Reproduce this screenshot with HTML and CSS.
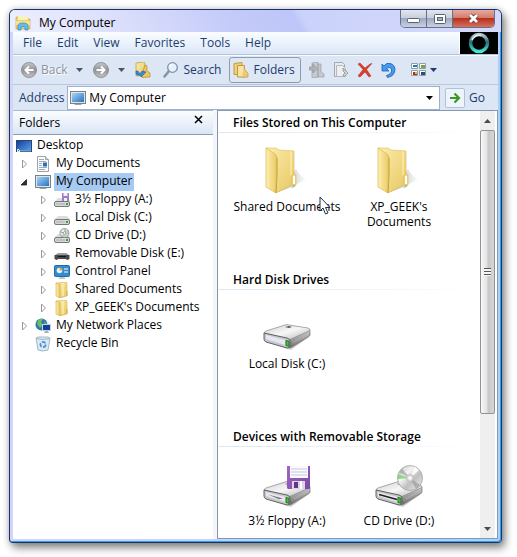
FILE: index.html
```html
<!DOCTYPE html>
<html lang="en">
<head>
  <meta charset="UTF-8">
  <meta name="viewport" content="width=device-width, initial-scale=1.0">
  <title>My Computer</title>
  <link rel="stylesheet" href="styles.css">
</head>
<body>
  <!-- shared icons -->
  <svg class="sprite" aria-hidden="true">
    <defs>
      <linearGradient id="gold" x1="0" y1="0" x2="1" y2="1">
        <stop offset="0" stop-color="#fbeeb0"/><stop offset="1" stop-color="#e8c860"/>
      </linearGradient>
      <linearGradient id="goldFront" x1="0" y1="0" x2="1" y2="0">
        <stop offset="0" stop-color="#fdf0b0"/><stop offset="1" stop-color="#e9c862"/>
      </linearGradient>
      <linearGradient id="screen" x1="0" y1="0" x2="1" y2="1">
        <stop offset="0" stop-color="#a5d5f8"/><stop offset="1" stop-color="#2873bd"/>
      </linearGradient>
      <linearGradient id="navy" x1="0" y1="0" x2="1" y2="1">
        <stop offset="0" stop-color="#123b96"/><stop offset="1" stop-color="#5ca5ee"/>
      </linearGradient>
      <linearGradient id="metalTop" x1="0" y1="0" x2="1" y2="1">
        <stop offset="0" stop-color="#cfcfcf"/><stop offset=".5" stop-color="#f7f7f7"/><stop offset="1" stop-color="#b5b5b5"/>
      </linearGradient>
      <linearGradient id="metalSide" x1="0" y1="0" x2="0" y2="1">
        <stop offset="0" stop-color="#d0d0d0"/><stop offset="1" stop-color="#707070"/>
      </linearGradient>
      <linearGradient id="grayBall" x1="0" y1="0" x2="0" y2="1">
        <stop offset="0" stop-color="#c9cacc"/><stop offset=".5" stop-color="#8f9194"/><stop offset="1" stop-color="#c3c5c8"/>
      </linearGradient>
      <linearGradient id="purple" x1="0" y1="0" x2="1" y2="1">
        <stop offset="0" stop-color="#a267c4"/><stop offset="1" stop-color="#7b48a4"/>
      </linearGradient>
      <linearGradient id="disc" x1="0" y1="0" x2="1" y2="1">
        <stop offset="0" stop-color="#bdbdbd"/><stop offset=".35" stop-color="#f5f5f5"/><stop offset=".6" stop-color="#c0c0c0"/><stop offset="1" stop-color="#eee"/>
      </linearGradient>
      <linearGradient id="teal" x1="0" y1="0" x2="0" y2="1">
        <stop offset="0" stop-color="#b8cbd1"/><stop offset=".45" stop-color="#2b6a7c"/><stop offset="1" stop-color="#3fe9d5"/>
      </linearGradient>
      <linearGradient id="castFade" x1="0" y1="0" x2="1" y2="0">
        <stop offset="0" stop-color="#777" stop-opacity=".7"/><stop offset="1" stop-color="#999" stop-opacity="0"/>
      </linearGradient>
    </defs>

    <symbol id="monitor" viewBox="0 0 16 16">
      <rect x=".5" y="1.500" width="15" height="12" fill="#dfe5ea" stroke="#77828c"/>
      <rect x="2" y="3" width="12" height="9" fill="url(#screen)"/>
      <path d="M5 14h6l1 1H4z" fill="#9ba3aa"/>
    </symbol>
    <symbol id="desktop" viewBox="0 0 16 16">
      <rect x=".5" y="2.500" width="15" height="11" fill="url(#navy)" stroke="#274673"/>
      <path d="M1 12h14v1.500H1z" fill="#6f9ccc"/><path d="M1 11h3v3H1z" fill="#d7e8f5"/><path d="M2 13l3-3" stroke="#2d83c8"/>
    </symbol>
    <symbol id="docs" viewBox="0 0 16 16">
      <path d="M2.500.5h8l3 3v12h-11z" fill="#fafcfd" stroke="#9ba3a9"/>
      <path d="M10.500.5v3h3" fill="#dfe5e9" stroke="#9ba3a9"/>
      <path d="M4 3.500h5M4 5.500h7M4 7.500h3M4 9.500h3M4 11.500h8M4 13.500h6" stroke="#9aaebf"/>
      <rect x="8" y="6.500" width="4" height="4" fill="#2f6fb4"/>
    </symbol>
    <symbol id="folder16" viewBox="0 0 16 16">
      <path d="M2 1l10-1 1 1v13l-7 2z" fill="url(#gold)" stroke="#d0a73f" stroke-width=".5"/>
      <path d="M2 1l4 1.500V16l-4-2z" fill="url(#goldFront)" stroke="#c99f37" stroke-width=".5"/>
      <path d="M9 1v13" stroke="#fff6c6"/><path d="M13 9v5" stroke="#d8ad4a"/>
    </symbol>
    <symbol id="drive16" viewBox="0 0 16 16">
      <path d="M1 9l3-3h9l3 3v1H1z" fill="#dcdedd"/>
      <rect x=".5" y="9.500" width="15" height="5" rx="1.500" fill="#d5d8d6" stroke="#747876"/>
      <path d="M2 12h9" stroke="#a9adab"/><path d="M12 12h2" stroke="#31a534" stroke-width="2"/>
    </symbol>
    <symbol id="folder48" viewBox="0 0 48 48">
      <path d="M15 45L33 22Q38 31 44 32L28 40z" fill="url(#castFade)"/>
      <path d="M3 1l10 0 3 2 15 1v33l-18 9z" fill="url(#gold)" stroke="#dcb958" stroke-width=".6"/>
      <path d="M28 4.500v24" stroke="#fff3bd"/>
      <path d="M29 28q2-3 4 0v10l-4 3z" fill="#f3d777" stroke="#d3ae4c" stroke-width=".5"/>
      <path d="M31 29v9" stroke="#fff" stroke-width="2"/><path d="M31 37v3" stroke="#56a4c8"/>
      <path d="M3 1l9 6q2 1 2 5l-1 34-10-6z" fill="url(#goldFront)" stroke="#d5ae46" stroke-width=".6"/>
      <path d="M14 11v18l-1 17" fill="none" stroke="#c69a2f" stroke-width=".8"/>
    </symbol>
    <symbol id="drive48" viewBox="0 0 48 48">
      <path d="M6 38l18 7 4 1 18-13-2-5z" fill="#777" opacity=".35"/>
      <path d="M27 34l19-9q1 0 1 2v4q0 1-2 2L29 43q-2 1-3 1z" fill="url(#metalSide)" stroke="#606060" stroke-width=".6"/>
      <path d="M1 29q0-1 2-2l19-6q2-1 4 0l19 3q3 1 1 3l-18 8q-2 1-4 0z" fill="url(#metalTop)" stroke="#888" stroke-width=".7"/>
      <path d="M1 29l23 5q3 1 3 3v5q0 2-3 2L3 38q-2-1-2-3z" fill="#c7c7ca" stroke="#555" stroke-width=".9"/>
      <path d="M3 31l19 5v5L3 35z" fill="#e7e7f3"/>
      <path d="M22 23l4-1 3 1-3 1z" fill="#555"/>
      <path d="M31 38l14-8" stroke="#b9b9b9" stroke-width=".7"/>
      <path d="M23 36.500l3 .8v5l-3-.8z" fill="#3ccb24" stroke="#14601a" stroke-width=".8"/>
    </symbol>
    <symbol id="caretDown" viewBox="0 0 7 4"><path d="M0 0h7L3.500 4z" fill="currentColor"/></symbol>
    <symbol id="twistClosed" viewBox="0 0 8 10"><path d="M2.500 1l4 4-4 4z" fill="#fff" stroke="#999"/></symbol>
    <symbol id="twistOpen" viewBox="0 0 8 10"><path d="M6.500 2.500v5.500H1z" fill="#333" stroke="#111" stroke-width=".7"/></symbol>
  </svg>

  <div class="window">
    <header class="titlebar">
      <svg class="ico" viewBox="0 0 16 16"><path d="M1 2h5l1 2h8v10H1z" fill="#e9d078" stroke="#c9ab58" stroke-width=".7"/><path d="M3 1h10v4H3z" fill="#f9f2bd"/><path d="M1 6h14v4H1z" fill="#f7e38f"/><path d="M3 15v-4q0-3 5-3t5 3v4h-3v-3q-2-1-4 0v3z" fill="#63bde9" stroke="#3488bb" stroke-width=".7"/></svg>
      <h1>My Computer</h1>
      <div class="win-btns">
        <button class="min" aria-label="Minimize"><svg width="13" height="6" viewBox="0 0 13 6"><rect x=".5" y=".5" width="12" height="4" rx="1" fill="#fff" stroke="#596271"/></svg></button>
        <button class="max" aria-label="Maximize"><svg width="12" height="10" viewBox="0 0 12 10"><rect x=".5" y=".5" width="11" height="9" rx="1" fill="#fff" stroke="#596271"/><rect x="3.500" y="3.500" width="5" height="3" fill="#a9b4c9" stroke="#596271"/></svg></button>
        <button class="close" aria-label="Close"><svg width="13" height="11" viewBox="0 0 13 11"><path d="M3 2l7 7M10 2l-7 7" stroke="#6d3c42" stroke-width="4.500"/><path d="M3 2l7 7M10 2l-7 7" stroke="#fff" stroke-width="2.800"/></svg></button>
      </div>
    </header>

    <nav class="menubar">
      <button>File</button>
      <button>Edit</button>
      <button>View</button>
      <button>Favorites</button>
      <button>Tools</button>
      <button>Help</button>
      <div class="throbber"><svg width="22" height="22" viewBox="0 0 22 22"><circle cx="11" cy="11" r="8.500" fill="none" stroke="url(#teal)" stroke-width="3.500"/><path d="M4 8a7.500 7.500 0 0 1 9-4.500" fill="none" stroke="#e3eef0" stroke-width="1.500"/></svg></div>
    </nav>

    <div class="toolbar">
      <button class="tool back" disabled>
        <svg class="ico" viewBox="0 0 16 16"><circle cx="8" cy="8" r="7.500" fill="url(#grayBall)" stroke="#909295"/><path d="M12.500 8H5M8 4.500L4.500 8 8 11.500" fill="none" stroke="#fff" stroke-width="2"/></svg>
        Back
      </button>
      <button class="drop" aria-label="Back history"><svg class="caret"><use href="#caretDown"/></svg></button>
      <button class="tool" aria-label="Forward" disabled>
        <svg class="ico" viewBox="0 0 16 16"><circle cx="8" cy="8" r="7.500" fill="url(#grayBall)" stroke="#909295"/><path d="M3.500 8H11M8 4.500L11.500 8 8 11.500" fill="none" stroke="#fff" stroke-width="2"/></svg>
      </button>
      <button class="drop" aria-label="Forward history"><svg class="caret"><use href="#caretDown"/></svg></button>
      <button class="tool up" aria-label="Up">
        <svg class="ico" viewBox="0 0 16 16"><path d="M1 1l8-1 1 1v12l-9 1z" fill="url(#gold)" stroke="#bd9336" stroke-width=".7"/><path d="M10 3l2 1v5l3 2v4l-8 .5V12z" fill="#edc660" stroke="#b98b2c" stroke-width=".7"/><path d="M1 9v2q0 3 4 2l1 2 5-5-4-1-1 2q-3 1-3-2z" fill="#368adb" stroke="#1b5ca7" stroke-width=".6"/></svg>
      </button>
      <button class="tool search">
        <svg class="ico" viewBox="0 0 16 16"><path d="M6 9L1.500 14.500" stroke="#85929f" stroke-width="2.500" stroke-linecap="round"/><circle cx="9.500" cy="5.500" r="4.800" fill="#e5f2fc" stroke="#7b93aa" stroke-width="1.300"/><path d="M6.500 5a3 3 0 0 1 3-2.500" fill="none" stroke="#fff" stroke-width="1.500"/></svg>
        Search
      </button>
      <button class="tool folders" aria-pressed="true">
        <svg class="ico" viewBox="0 0 16 16"><path d="M1 1.500l8-1v12H1z" fill="#eecf7c" stroke="#c39a43"/><path d="M4.500 3.500h7V15h-7z" fill="#f8e3a1" stroke="#c39a43"/><path d="M11 5l1 3 3 3v4l-6 .5" fill="#efc777" stroke="#c39a43" stroke-width=".7"/></svg>
        Folders
      </button>
      <div class="edit-tools">
        <button class="tool" aria-label="Move to" disabled><svg class="ico" viewBox="0 0 16 16"><path d="M3 1l6-1v15l-6 1zM9 2h3v8l3 2v3H9z" fill="#c6cacf" stroke="#999ea3" stroke-width=".7"/><path d="M0 5h4V2l4 4.500L4 11V8H0z" fill="#b1b5b9" stroke="#8a8e92" stroke-width=".6"/></svg></button>
        <button class="tool" aria-label="Copy to" disabled><svg class="ico" viewBox="0 0 16 16"><path d="M1.500.5h8l2 2v12h-10z" fill="#e8eaed" stroke="#a4a8ac"/><path d="M3.500 3.500h6l3 3v8h-9z" fill="#eceef0" stroke="#b4b7bb"/><path d="M10 6l5 5-4 4-1-2 2-2-2-2z" fill="#cfd2d5" stroke="#8b8f93" stroke-width=".8"/></svg></button>
        <button class="tool" aria-label="Delete"><svg class="ico" viewBox="0 0 16 16"><path d="M1 2l2-1 5 5 5-4 2-.5L9.500 7.500 14 14l-2 1-4-5-5 5-2-1 5-6.500z" fill="#d9402c" stroke="#b52b1e" stroke-width=".5"/></svg></button>
        <button class="tool" aria-label="Undo"><svg class="ico" viewBox="0 0 16 16"><path d="M1 2v7h7L5.500 6.500Q10 4 10.500 8t-5 5.500l1 2Q14 14 14 7 13 .5 5.500 1.500L3 4z" fill="#459af0" stroke="#1c5dbb" stroke-width=".8"/></svg></button>
      </div>
      <button class="tool views" aria-label="Views">
        <svg class="ico" viewBox="0 0 16 16"><path d="M.5 1.500h6v5h-6zM8.500 1.500h6v5h-6zM.5 8.500h6v5h-6zM8.500 8.500h6v5h-6z" fill="#fff" stroke="#8fa0aa"/><path d="M2 3h4v2H2z" fill="#2680a4"/><path d="M10 3h4v3h-4z" fill="#77a63c"/><path d="M2 10h4v3H2z" fill="#a63217"/><path d="M4 10h2v2H4z" fill="#e9b62e"/><path d="M10 10h4v3h-4z" fill="#294f82"/></svg>
        <svg class="caret"><use href="#caretDown"/></svg>
      </button>
    </div>

    <form class="addressbar">
      <label for="address">Address</label>
      <div class="address-box">
        <svg class="ico"><use href="#monitor"/></svg>
        <input type="text" id="address" value="My Computer">
        <button type="button" class="drop" aria-label="Address history"><svg class="caret"><use href="#caretDown"/></svg></button>
      </div>
      <button type="button" class="go">
        <span class="go-icon"><svg width="12" height="12" viewBox="0 0 12 12"><path d="M1 6h8M5.500 1.500L10 6l-4.500 4.500" fill="none" stroke="#3b9a26" stroke-width="2.200"/></svg></span>
        Go
      </button>
    </form>

    <main class="panes">
      <aside class="tree-pane">
        <div class="tree-head">
          <h2>Folders</h2>
          <button aria-label="Close folders"><svg width="9" height="9" viewBox="0 0 9 9"><path d="M1 1l7 7M8 1L1 8" stroke="#000" stroke-width="1.500"/></svg></button>
        </div>
        <ul class="tree">
          <li><div class="row root"><svg class="ico"><use href="#desktop"/></svg><span>Desktop</span></div>
            <ul>
              <li><div class="row"><button class="twist" aria-label="Expand"><svg><use href="#twistClosed"/></svg></button><svg class="ico"><use href="#docs"/></svg><span>My Documents</span></div></li>
              <li><div class="row selected"><button class="twist" aria-label="Collapse"><svg><use href="#twistOpen"/></svg></button><svg class="ico"><use href="#monitor"/></svg><span>My Computer</span></div>
                <ul>
                  <li><div class="row"><button class="twist" aria-label="Expand"><svg><use href="#twistClosed"/></svg></button><svg class="ico" viewBox="0 0 16 16"><use href="#drive16"/><path d="M8 1h7v8H8z" fill="#a47bc2"/><path d="M9.500 1h4v3h-4zM10 6h3v3h-3z" fill="#f3edf8"/></svg><span>3½ Floppy (A:)</span></div></li>
                  <li><div class="row"><button class="twist" aria-label="Expand"><svg><use href="#twistClosed"/></svg></button><svg class="ico"><use href="#drive16"/></svg><span>Local Disk (C:)</span></div></li>
                  <li><div class="row"><button class="twist" aria-label="Expand"><svg><use href="#twistClosed"/></svg></button><svg class="ico" viewBox="0 0 16 16"><use href="#drive16"/><circle cx="10.500" cy="5" r="4.500" fill="url(#disc)" stroke="#858b88" stroke-width=".8"/><path d="M7 4l3 1M11 1v3" stroke="#6eae71"/><circle cx="10.500" cy="5" r="1.200" fill="#fff" stroke="#888" stroke-width=".6"/></svg><span>CD Drive (D:)</span></div></li>
                  <li><div class="row"><button class="twist" aria-label="Expand"><svg><use href="#twistClosed"/></svg></button><svg class="ico" viewBox="0 0 16 16"><path d="M1 9l3-2h8l3 2z" fill="#9a9ca0"/><path d="M.5 9h15v4l-2 1-2-1h-7l-2 1-2-1z" fill="#484a4e"/><path d="M4 10.500h8" stroke="#15171a"/></svg><span>Removable Disk (E:)</span></div></li>
                  <li><div class="row"><button class="twist" aria-label="Expand"><svg><use href="#twistClosed"/></svg></button><svg class="ico" viewBox="0 0 16 16"><rect x=".5" y="1.500" width="15" height="11" rx="1" fill="#338dcc" stroke="#2369a2"/><circle cx="5.500" cy="6.500" r="2.800" fill="#e6f4fb"/><path d="M5.500 6.500V3.700a2.800 2.800 0 0 1 2.800 2.800z" fill="#f0a428"/><path d="M10 5h4M10 8h4" stroke="#fff"/><path d="M6 13h4l2 2H4z" fill="#bcc6cd"/></svg><span>Control Panel</span></div></li>
                  <li><div class="row"><button class="twist" aria-label="Expand"><svg><use href="#twistClosed"/></svg></button><svg class="ico"><use href="#folder16"/></svg><span>Shared Documents</span></div></li>
                  <li><div class="row"><button class="twist" aria-label="Expand"><svg><use href="#twistClosed"/></svg></button><svg class="ico"><use href="#folder16"/></svg><span>XP_GEEK's Documents</span></div></li>
                </ul>
              </li>
              <li><div class="row"><button class="twist" aria-label="Expand"><svg><use href="#twistClosed"/></svg></button><svg class="ico" viewBox="0 0 16 16"><circle cx="6.500" cy="6.500" r="6" fill="#2878b9"/><path d="M3 2q3-2 5-1L6 4l2 3-3 3-3-4zM9 3l3 3-2 1z" fill="#6fbd54"/><rect x="7.500" y="6.500" width="8" height="6" fill="#143f98" stroke="#c4d5e6"/><path d="M10 13h3l1 2H9z" fill="#a7b1ba"/></svg><span>My Network Places</span></div></li>
              <li><div class="row leaf"><svg class="ico" viewBox="0 0 16 16"><path d="M1 2l2-1h10l2 1-2 12q-5 2-10 0z" fill="#dbe9f2" stroke="#a2b8c6"/><path d="M1 2.500q7 2 14 0" fill="none" stroke="#a2b8c6"/><circle cx="8" cy="8.500" r="2.600" fill="none" stroke="#4a90d8" stroke-width="1.800" stroke-dasharray="4 1.400"/></svg><span>Recycle Bin</span></div></li>
            </ul>
          </li>
        </ul>
      </aside>

      <section class="files-pane">
        <div class="files">
          <section class="group">
            <h2>Files Stored on This Computer</h2>
            <div class="items">
              <div class="item">
                <svg class="big"><use href="#folder48"/></svg>
                <span>Shared Documents</span>
                <svg class="pointer" viewBox="0 0 12 19"><path d="M1 1v14l3-3 2.500 6 2.500-1-2.500-5.500H11z" fill="#fff" stroke="#222c4d"/></svg>
              </div>
              <div class="item">
                <svg class="big"><use href="#folder48"/></svg>
                <span>XP_GEEK's Documents</span>
              </div>
            </div>
          </section>
          <section class="group">
            <h2>Hard Disk Drives</h2>
            <div class="items">
              <div class="item">
                <svg class="big"><use href="#drive48"/></svg>
                <span>Local Disk (C:)</span>
              </div>
            </div>
          </section>
          <section class="group">
            <h2>Devices with Removable Storage</h2>
            <div class="items">
              <div class="item">
                <svg class="big" viewBox="0 0 48 48"><use href="#drive48"/><path d="M5 33.500l15 4-4 .8z" fill="#777"/><path d="M24 5h23v22l-1 1H25l-1-1z" fill="url(#purple)"/><path d="M27 5h18v12H27z" fill="#fafaff"/><path d="M28 8h16M28 11h16M28 14h16" stroke="#c5c5de"/><path d="M29 20h13v8H29z" fill="#ddd5e6"/><path d="M31 21h4v6h-4z" fill="#633788"/><path d="M38 20v8" stroke="#fff" stroke-width="2"/></svg>
                <span>3½ Floppy (A:)</span>
              </div>
              <div class="item">
                <svg class="big" viewBox="0 0 48 48"><use href="#drive48"/><path d="M4 33.500l18 5" stroke="#222" stroke-width="1.500"/><circle cx="35" cy="17" r="12.500" fill="url(#disc)" stroke="#999" stroke-width=".7"/><path d="M35 17L27 7.500l-3 4z" fill="#8f979a" opacity=".6"/><path d="M35 17L23 13l-.5 5z" fill="#78d26a" opacity=".8"/><path d="M35 17l10 7-4 4z" fill="#9b9b9b" opacity=".7"/><path d="M35 17l5-11 4 3z" fill="#fff" opacity=".9"/><circle cx="35" cy="17" r="3.500" fill="#ddd" stroke="#aaa" stroke-width=".6"/><circle cx="35" cy="17" r="1.500" fill="#fff"/></svg>
                <span>CD Drive (D:)</span>
              </div>
            </div>
          </section>
        </div>
        <div class="scrollbar">
          <button aria-label="Scroll up"><svg class="caret flip"><use href="#caretDown"/></svg></button>
          <div class="track"><div class="thumb"><i></i></div></div>
          <button aria-label="Scroll down"><svg class="caret"><use href="#caretDown"/></svg></button>
        </div>
      </section>
    </main>
  </div>
</body>
</html>
```
FILE: styles.css
```css
* {
  box-sizing: border-box;
  margin: 0;
  padding: 0;
}

body {
  background: #fff;
  padding: 9px 15px 15px 9px;
  font-family: "Open Sans", "Noto Sans", sans-serif;
  font-size: 12px;
  line-height: 16px;
  color: #000;
}

button, input {
  font: inherit;
  color: inherit;
  background: none;
  border: 0;
}

svg {
  display: block;
  flex: none;
}

.sprite {
  position: absolute;
  width: 0;
  height: 0;
}

.ico {
  width: 16px;
  height: 16px;
}

.caret {
  width: 7px;
  height: 4px;
}

h1, h2 {
  font-size: 12px;
}

.window {
  border: 1px solid #17306e;
  border-right-color: #0d3a72;
  border-bottom-color: #0d3a62;
  border-radius: 6px 6px 4px 4px;
  padding: 0 3px 3px 3px;
  background: linear-gradient(to right, #d3d4fa, #a9d1fa);
  box-shadow: 3px 5px 9px rgba(0, 0, 0, .45), 0 0 7px rgba(0, 0, 0, .2), inset -1px -1px 0 #3c9bf0;
}

/* title bar */
.titlebar {
  display: flex;
  align-items: center;
  height: 22px;
  margin: 0 -3px;
  padding: 0 6px 0 5px;
  border-radius: 5px 5px 0 0;
  background: linear-gradient(60deg, #eef0ff 0, #d9ddfb 25%, #c4cbf9 45%, #bdc6f8 58%, #cbd2fb 60%, #d5daf9 100%);
}

.titlebar h1 {
  flex: 1;
  margin: 4px 0 0 8px;
  font-weight: normal;
}

.titlebar .ico {
  margin-top: 3px;
}

.win-btns {
  display: flex;
  align-self: flex-start;
  border: 1px solid #65708a;
  border-top: 0;
  border-radius: 0 0 5px 5px;
  overflow: hidden;
}

.win-btns button {
  display: flex;
  align-items: center;
  justify-content: center;
  height: 17px;
  width: 26px;
  border-right: 1px solid #65708a;
  background: linear-gradient(#e2e6ef 0, #c7cddb 48%, #9ea8bf 50%, #c8d2e6 100%);
}

.win-btns .min {
  padding-top: 5px;
}

.win-btns .close {
  width: 41px;
  border-right: 0;
  background: linear-gradient(#e6aa9f 0, #d27a6b 48%, #b8301b 50%, #d5705c 100%);
}

/* menu */
.menubar {
  display: flex;
  align-items: center;
  gap: 15px;
  height: 23px;
  padding-left: 10px;
  color: #1d3c6e;
  border-bottom: 1px solid #b5c3da;
  background: linear-gradient(#fbfdff 0, #eaf2fc 50%, #dbe6f6 100%);
}

.throbber {
  display: flex;
  align-items: center;
  justify-content: center;
  width: 39px;
  height: 22px;
  margin-left: auto;
  background: #000;
  border-left: 1px solid #fff;
}

/* toolbar */
.toolbar {
  display: flex;
  align-items: center;
  height: 30px;
  padding-left: 8px;
  color: #1d3c6e;
  border-top: 1px solid #f6f9fe;
  border-bottom: 1px solid #b9c7dc;
  background: #dce6f5;
}

.tool {
  display: flex;
  align-items: center;
  gap: 4px;
}

.back {
  color: #8c939d;
  text-shadow: 1px 1px 0 #fff;
}

.toolbar .drop {
  padding: 6px 10px 6px 9px;
}

.toolbar .drop .caret {
  color: #4b5566;
}

.up {
  margin-right: 12px;
}

.folders {
  height: 26px;
  margin-left: 8px;
  padding: 0 5px 0 3px;
  border: 1px solid #8f9cb0;
  border-radius: 3px;
  background: #dee8f5;
}

.edit-tools {
  display: flex;
  gap: 8px;
  margin-left: 8px;
}

.views {
  margin-left: 14px;
  gap: 3px;
}

/* address */
.addressbar {
  display: flex;
  align-items: center;
  height: 25px;
  padding-left: 6px;
  color: #1d3c6e;
  background: #dce6f5;
}

.address-box {
  display: flex;
  align-items: center;
  flex: 1;
  height: 24px;
  margin-left: 3px;
  padding-left: 2px;
  background: #fff;
  border: 1px solid #9fb1c9;
  color: #000;
}

.address-box input {
  flex: 1;
  min-width: 0;
  margin-left: 3px;
  outline: 0;
}

.address-box .drop {
  padding: 8px 6px;
}

.go {
  display: flex;
  align-items: center;
  gap: 4px;
  padding: 0 13px 0 5px;
}

.go-icon {
  display: flex;
  align-items: center;
  justify-content: center;
  width: 20px;
  height: 20px;
  border: 1px solid #b3c1d6;
  border-radius: 2px;
  background: #eef4fc;
}

/* panes */
.panes {
  display: grid;
  grid-template-columns: minmax(200px, 41%) 1fr;
  gap: 4px;
  background: #f5f5f7;
}

.tree-pane {
  background: #fff;
}

.tree-head {
  display: flex;
  align-items: center;
  justify-content: space-between;
  height: 25px;
  padding: 0 10px 0 6px;
  border-top: 1px solid #a9bbd2;
  border-bottom: 1px solid #8f9fb2;
  background: linear-gradient(#fbfdff, #dae6f5);
}

.tree-head h2 {
  font-weight: normal;
}

.tree-head button {
  margin-bottom: 7px;
}

.tree {
  padding-top: 2px;
}

.tree ul ul {
  padding-left: 19px;
}

ul {
  list-style: none;
}

.row {
  display: flex;
  align-items: center;
  height: 18px;
  padding-left: 7px;
}

.row.root {
  padding-left: 3px;
}

.row.leaf {
  padding-left: 22px;
}

.row span {
  height: 18px;
  line-height: 16px;
  margin-left: 3px;
  padding: 0 2px;
  white-space: nowrap;
}

.row.selected span {
  background: #a6caf4;
}

.twist {
  width: 8px;
  height: 10px;
  margin-right: 7px;
}

.twist svg {
  width: 8px;
  height: 10px;
}

.files-pane {
  display: flex;
  padding-right: 2px;
  border: 1px solid #8398b3;
  background: #fff;
}

.files {
  flex: 1;
  min-width: 0;
}

.group {
  min-height: 157px;
}

.group:last-child {
  min-height: 113px;
}

.group h2 {
  height: 22px;
  padding: 4px 0 0 15px;
  font-weight: 600;
  border-bottom: 1px solid;
  border-image: linear-gradient(to right, #dbe8f1, #fff) 1;
  white-space: nowrap;
}

.items {
  display: flex;
  padding: 14px 0 0 13px;
}

.item {
  position: relative;
  display: flex;
  flex-direction: column;
  align-items: center;
  gap: 4px;
  width: 112px;
  text-align: center;
}

.item span {
  line-height: 15px;
}

.big {
  width: 48px;
  height: 48px;
}

.pointer {
  position: absolute;
  left: 88px;
  top: 49px;
  width: 12px;
  height: 19px;
}

/* scrollbar */
.scrollbar {
  display: flex;
  flex-direction: column;
  width: 15px;
  background: #efeff0;
}

.scrollbar button {
  display: flex;
  align-items: center;
  justify-content: center;
  height: 19px;
  color: #4b4b4b;
}

.flip {
  transform: rotate(180deg);
}

.track {
  flex: 1;
}

.thumb {
  display: flex;
  align-items: center;
  justify-content: center;
  height: 73%;
  border: 1px solid #929292;
  border-radius: 2px;
  background: linear-gradient(to right, #f8f8f8 0, #e3e3e4 45%, #c6c7c9 55%, #d6d7d9 100%);
}

.thumb i {
  width: 7px;
  height: 8px;
  background: repeating-linear-gradient(#555 0, #555 1px, #f4f4f4 1px, #f4f4f4 3px);
}
```
